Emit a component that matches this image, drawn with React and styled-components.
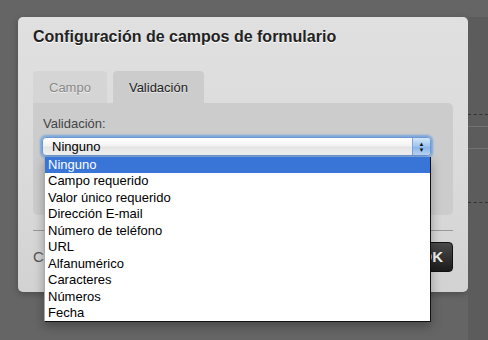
import React from 'react'
import styled, { createGlobalStyle } from 'styled-components'

const GlobalStyle = createGlobalStyle`
  body {
    margin: 0;
    background: #656565;
    font-family: "Liberation Sans", Arial, sans-serif;
  }
`

const options = [
  'Ninguno',
  'Campo requerido',
  'Valor único requerido',
  'Dirección E-mail',
  'Número de teléfono',
  'URL',
  'Alfanumérico',
  'Caracteres',
  'Números',
  'Fecha',
]

function App() {
  return (
    <>
      <GlobalStyle />
      <Page>
        <Modal>
          <Title>Configuración de campos de formulario</Title>
          <Tabs>
            <Tab>Campo</Tab>
            <Tab active>Validación</Tab>
          </Tabs>
          <Panel>
            <Label>Validación:</Label>
            <Select>
              <span>Ninguno</span>
              <Stepper>
                <span>▲</span>
                <span>▼</span>
              </Stepper>
            </Select>
            <List>
              {options.map((o, i) => (
                <Option key={o} selected={i === 0}>{o}</Option>
              ))}
            </List>
          </Panel>
          <Footer>
            <CancelButton>Cancelar</CancelButton>
            <OkButton>OK</OkButton>
          </Footer>
        </Modal>
        <Side>
          <Rule dashed top={97} />
          <Rule top={11} />
          <Rule top={21} />
          <Rule dashed top={53} />
        </Side>
      </Page>
    </>
  )
}

const Page = styled.div`
  width: 488px;
  height: 340px;
  overflow: hidden;
  display: flex;
  align-items: flex-start;
  padding: 17px 0 0 18px;
  box-sizing: border-box;
`

const Modal = styled.div`
  width: 450px;
  height: 275px;
  box-sizing: border-box;
  background: linear-gradient(#e0e0e0, #dadada 60%, #d2d2d2);
  border-radius: 5px;
  padding: 10px 15px 0 15px;
  display: flex;
  flex-direction: column;
  box-shadow: 0 2px 6px rgba(0,0,0,0.25);
  flex-shrink: 0;
`

const Title = styled.h1`
  margin: 0;
  font-size: 16px;
  line-height: 19px;
  font-weight: bold;
  color: #222;
  text-shadow: 0 1px 0 #fff;
`

const Tabs = styled.div`
  display: flex;
  gap: 6px;
  margin-top: 25px;
`

const Tab = styled.div`
  height: 32px;
  padding: 0 16px;
  display: flex;
  align-items: center;
  font-size: 13px;
  border-radius: 4px 4px 0 0;
  background: ${p => (p.active ? '#cccccc' : '#d5d5d5')};
  color: ${p => (p.active ? '#222' : '#888')};
  text-shadow: 0 1px 0 rgba(255,255,255,0.6);
`

const Panel = styled.div`
  position: relative;
  height: 112px;
  background: #cccccc;
  border-radius: 0 5px 5px 5px;
  padding: 13px 22px 0 9px;
  box-sizing: border-box;
`

const Label = styled.div`
  font-size: 13px;
  line-height: 15px;
  color: #444;
  padding-left: 1px;
`

const Select = styled.div`
  margin-top: 6px;
  height: 19px;
  box-sizing: border-box;
  border: 1px solid #6f97cf;
  border-radius: 4px;
  background: linear-gradient(#ffffff, #f2f2f2 45%, #e4e4e4 55%, #f4f4f4);
  box-shadow: 0 0 2px 2px rgba(95,155,225,0.75);
  display: flex;
  align-items: center;
  justify-content: space-between;
  font-size: 13px;
  color: #000;
  padding-left: 9px;
  overflow: hidden;
`

const Stepper = styled.div`
  width: 17px;
  height: 100%;
  background: linear-gradient(#d4e6f8, #9cc4ef 50%, #86b6ec 55%, #bcd8f5);
  border-left: 1px solid #7fa4d6;
  display: flex;
  flex-direction: column;
  align-items: center;
  justify-content: center;
  font-size: 6px;
  line-height: 6px;
  color: #111;
`

const List = styled.div`
  position: absolute;
  left: 11px;
  top: 54px;
  width: 387px;
  background: #fff;
  border-left: 1px solid #aaa;
  border-right: 1px solid #111;
  border-bottom: 1px solid #111;
  box-sizing: border-box;
  box-shadow: 0 4px 10px rgba(0,0,0,0.3);
  z-index: 2;
`

const Option = styled.div`
  height: 16.45px;
  line-height: 16.45px;
  padding-left: 3px;
  font-size: 13px;
  color: ${p => (p.selected ? '#fff' : '#000')};
  background: ${p => (p.selected ? '#3875d7' : 'transparent')};
`

const Footer = styled.div`
  margin-top: 15px;
  border-top: 1px solid #999;
  display: flex;
  align-items: center;
  justify-content: space-between;
  padding-top: 11px;
`

const CancelButton = styled.div`
  font-size: 15px;
  color: #555;
  height: 30px;
  line-height: 30px;
`

const OkButton = styled.div`
  height: 30px;
  box-sizing: border-box;
  padding: 0 9px;
  border-radius: 4px;
  border: 1px solid #111;
  background: linear-gradient(#4a4a4a, #1c1c1c);
  color: #f2f2f2;
  font-size: 15px;
  font-weight: bold;
  line-height: 28px;
`

const Side = styled.div`
  flex: 1;
  height: 323px;
  background: #5c5c5c;
  display: flex;
  flex-direction: column;
`

const Rule = styled.div`
  margin-top: ${p => p.top}px;
  border-top: 1px ${p => (p.dashed ? 'dashed #333' : 'solid #727272')};
`

export default App
